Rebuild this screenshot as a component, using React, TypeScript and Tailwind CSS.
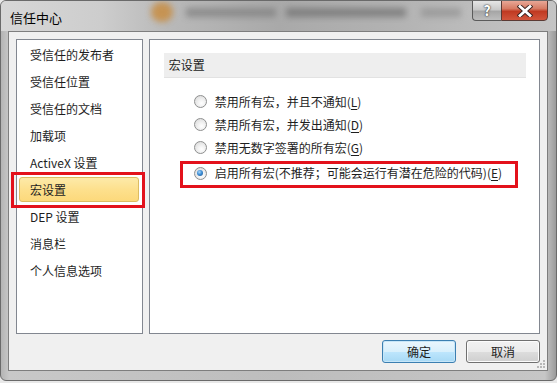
import React from "react";

const FONT = { fontFamily: '"Noto Sans CJK SC", "Noto Sans", sans-serif' };

function Radio({ checked }: { checked?: boolean }) {
  return (
    <div className="w-[13px] h-[13px] rounded-full border border-[#8e8f8f] bg-[radial-gradient(circle_at_60%_65%,#ffffff_0%,#f2f2f2_35%,#d5d5d5_100%)] flex items-center justify-center shrink-0">
      {checked && (
        <div className="w-[6px] h-[6px] rounded-full bg-[radial-gradient(circle_at_40%_35%,#a9d7fa_0%,#3f8fd6_45%,#1b4f8a_100%)]" />
      )}
    </div>
  );
}

function Acc({ k }: { k: string }) {
  return (
    <span>
      (<span className="underline underline-offset-[2px]">{k}</span>)
    </span>
  );
}

const items = [
  "受信任的发布者",
  "受信任位置",
  "受信任的文档",
  "加载项",
  "ActiveX 设置",
  "宏设置",
  "DEP 设置",
  "消息栏",
  "个人信息选项",
];

export default function App() {
  return (
    <div
      className="w-[557px] h-[383px] overflow-hidden bg-[#e8e8e8] text-[12px] text-[#1e1e1e]"
      style={FONT}
    >
      <div className="w-[557px] h-[381px] flex flex-col rounded-t-[6px] rounded-b-[6px] border border-[#6a6a6a] bg-[linear-gradient(to_right,#b4b4b4_0%,#c8c8c8_1.5%,#bdbdbd_50%,#c6c6c6_98%,#9a9a9a_100%)] overflow-hidden">
        {/* title bar */}
        <div className="relative h-[30px] flex shrink-0 bg-[linear-gradient(to_right,#d7d7d7_0%,#cdcdcd_18%,#b9b9b9_30%,#a9a9a9_50%,#b2b2b2_70%,#bcbcbc_85%,#c4c4c4_100%)]">
          <div className="absolute left-[150px] top-[1px] w-[22px] h-[20px] rounded-full bg-[#c98a3a] blur-[3px] opacity-80" />
          <div className="absolute left-[185px] top-[7px] w-[90px] h-[9px] bg-[#7d7d7d] blur-[3px] opacity-70" />
          <div className="absolute left-[285px] top-[7px] w-[120px] h-[9px] bg-[#6e6e6e] blur-[3px] opacity-70" />
          <div className="absolute left-[420px] top-[7px] w-[40px] h-[9px] bg-[#8a8a8a] blur-[3px] opacity-60" />
          <div className="relative flex-1 pl-[9px] pt-[4px] flex items-center text-[13px] text-black">
            信任中心
          </div>
          <div className="relative flex self-start mr-[8px] mt-[-1px]">
            <div className="w-[29px] h-[21px] rounded-bl-[4px] border border-[#5b5b5b] border-r-0 bg-[linear-gradient(to_bottom,#e6e6e6_0%,#c9c9c9_45%,#a6a6a6_55%,#bdbdbd_100%)] flex items-center justify-center text-white font-bold text-[14px] [text-shadow:0_0_2px_#333,0_0_1px_#333]">
              ?
            </div>
            <div className="w-[47px] h-[21px] rounded-br-[4px] border border-[#5b3a34] bg-[linear-gradient(to_bottom,#e8a796_0%,#d67b64_40%,#c03a22_55%,#d2553c_100%)] flex items-center justify-center">
              <svg width="16" height="12" viewBox="0 0 16 12">
                <path d="M3 1.5 L13 10.5 M13 1.5 L3 10.5" stroke="#3b2320" strokeWidth="4.6" strokeLinecap="square" />
                <path d="M3 1.5 L13 10.5 M13 1.5 L3 10.5" stroke="#ffffff" strokeWidth="2.8" strokeLinecap="square" />
              </svg>
            </div>
          </div>
        </div>

        {/* client area */}
        <div className="relative ml-[7px] mr-[8px] h-[340px] border border-[#7e7e7e] bg-[#f0f0f0] p-[7px] flex flex-col">
          <div className="flex gap-[6px] h-[297px]">
            {/* left list */}
            <div className="w-[127px] h-full border border-[#828790] bg-white pt-[1px] pl-[2px] pr-[3px]">
              {items.map((t) => {
                const sel = t === "宏设置";
                return (
                  <div key={t} className="relative h-[27px] flex items-center">
                    {sel ? (
                      <>
                        <div className="w-full h-[25px] rounded-[3px] border border-[#dcbc62] bg-[linear-gradient(to_bottom,#fdeaa9_0%,#fde08d_50%,#fcd97b_100%)] flex items-center pl-[10px]">
                          {t}
                        </div>
                        <div className="absolute left-[-8px] top-[-4px] w-[134px] h-[36px] border-[3px] border-[#e3111b]" />
                      </>
                    ) : (
                      <div className="pl-[11px]">{t}</div>
                    )}
                  </div>
                );
              })}
            </div>

            {/* right panel */}
            <div className="w-[392px] h-full border border-[#828790] bg-white pt-[13px] pl-[14px] pr-[13px]">
              <div className="h-[25px] bg-[#eeeeee] border-b border-[#e2e2e2] flex items-center pl-[5px] text-[#222]">
                宏设置
              </div>
              <div className="mt-[12px] pl-[30px] flex flex-col">
                <div className="h-[23px] flex items-center gap-[8px]">
                  <Radio />
                  <span>
                    禁用所有宏，并且不通知<Acc k="L" />
                  </span>
                </div>
                <div className="h-[23px] flex items-center gap-[8px]">
                  <Radio />
                  <span>
                    禁用所有宏，并发出通知<Acc k="D" />
                  </span>
                </div>
                <div className="h-[23px] flex items-center gap-[8px]">
                  <Radio />
                  <span>
                    禁用无数字签署的所有宏<Acc k="G" />
                  </span>
                </div>
                <div className="relative mt-[2px] h-[24px] flex items-center gap-[8px]">
                  <Radio checked />
                  <span>
                    启用所有宏(不推荐；可能会运行有潜在危险的代码)<Acc k="E" />
                  </span>
                  <div className="absolute left-[-14px] top-[0px] w-[338px] h-[27px] border-[3px] border-[#e3111b]" />
                </div>
              </div>
            </div>
          </div>

          {/* buttons */}
          <div className="mt-[6px] flex justify-end gap-[10px]">
            <div className="w-[74px] h-[23px] rounded-[3px] border border-[#3c7fb1] bg-[linear-gradient(to_bottom,#eaf6fd_0%,#d9f0fc_50%,#bee6fd_51%,#a7d9f5_100%)] shadow-[inset_0_0_0_1px_#c7e6f8] flex items-center justify-center">
              确定
            </div>
            <div className="w-[74px] h-[23px] rounded-[3px] border border-[#707070] bg-[linear-gradient(to_bottom,#f2f2f2_0%,#ebebeb_50%,#dddddd_51%,#cfcfcf_100%)] shadow-[inset_0_0_0_1px_#fcfcfc] flex items-center justify-center">
              取消
            </div>
          </div>

          <svg className="absolute right-[1px] bottom-[1px]" width="10" height="10" viewBox="0 0 10 10">
            <g fill="#b8b8b8">
              <rect x="7" y="1" width="2" height="2" />
              <rect x="4" y="4" width="2" height="2" />
              <rect x="7" y="4" width="2" height="2" />
              <rect x="1" y="7" width="2" height="2" />
              <rect x="4" y="7" width="2" height="2" />
              <rect x="7" y="7" width="2" height="2" />
            </g>
          </svg>
        </div>
      </div>
    </div>
  );
}
